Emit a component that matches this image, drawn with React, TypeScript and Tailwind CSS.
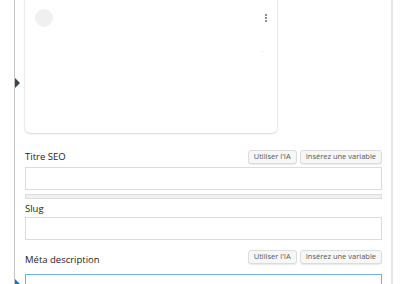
import React from "react";

function SmallButton({ label }: { label: string }) {
  return (
    <button className="h-[14px] rounded-[3px] border border-[#dcdcde] bg-[#f6f7f7] px-[5px] text-[7.5px] leading-none text-[#50575e] shadow-[0_1px_1px_rgba(0,0,0,0.08)]">
      {label}
    </button>
  );
}

function FieldHeader({
  label,
  buttons,
  labelClass = "",
}: {
  label: string;
  buttons?: boolean;
  labelClass?: string;
}) {
  return (
    <div className="flex h-[14px] items-center justify-between">
      <span className={`text-[9.5px] text-[#1d2327] ${labelClass}`}>{label}</span>
      {buttons && (
        <div className="flex gap-[3px]">
          <SmallButton label="Utiliser l'IA" />
          <SmallButton label="Insérez une variable" />
        </div>
      )}
    </div>
  );
}

export default function App() {
  return (
    <div
      className="relative h-[284px] w-[400px] overflow-hidden bg-white"
      style={{ fontFamily: '"Open Sans", "Liberation Sans", sans-serif' }}
    >
      <div className="flex h-full">
        <div className="relative w-[15px] shrink-0">
          <div className="absolute left-[14px] top-0 h-full w-px bg-[#c3c4c7]" />
          <div className="absolute left-[15px] top-[78px] h-0 w-0 border-y-[5px] border-l-[5px] border-y-transparent border-l-[#3c434a]" />
          <div className="absolute left-[15px] top-[279px] h-0 w-0 border-y-[5px] border-l-[5px] border-y-transparent border-l-[#2271b1]" />
        </div>
        <div className="w-[376px] shrink-0 pl-[10px] pr-[9px]">
          <div className="relative -mt-[6px] h-[139px] w-[252px] rounded-[5px] bg-white shadow-[0_0_2px_rgba(0,0,0,0.2),0_1px_2px_rgba(0,0,0,0.1)]">
            <div className="absolute left-[10px] top-[15px] h-[18px] w-[18px] rounded-full bg-[#f0f0f1]" />
            <div className="absolute left-[240px] top-[20px] flex flex-col gap-[1px]">
              <span className="h-[2px] w-[2px] bg-[#8c8f94]" />
              <span className="h-[2px] w-[2px] bg-[#8c8f94]" />
              <span className="h-[2px] w-[2px] bg-[#8c8f94]" />
            </div>
            <div className="absolute left-[237px] top-[57px] h-px w-px bg-[#dcdcde]" />
          </div>
          <div className="mt-[17px]">
            <FieldHeader label="Titre SEO" buttons />
            <div className="mt-[3px] h-[23px] border border-[#dcdcde] bg-white" />
            <div className="mt-[4px] h-[5px] border border-[#dcdcde] bg-[#f0f0f1]" />
            <div className="mt-[3px]">
              <FieldHeader label="Slug" />
            </div>
            <div className="mt-[1px] h-[23px] border border-[#dcdcde] bg-white" />
            <div className="mt-[10px]">
              <FieldHeader label="Méta description" buttons labelClass="translate-y-[3px]" />
            </div>
            <div className="mt-[10px] h-[23px] border border-[#72aee6] bg-white" />
          </div>
        </div>
        <div className="w-[2px] shrink-0 bg-[#e5e5e5]" />
      </div>
    </div>
  );
}
